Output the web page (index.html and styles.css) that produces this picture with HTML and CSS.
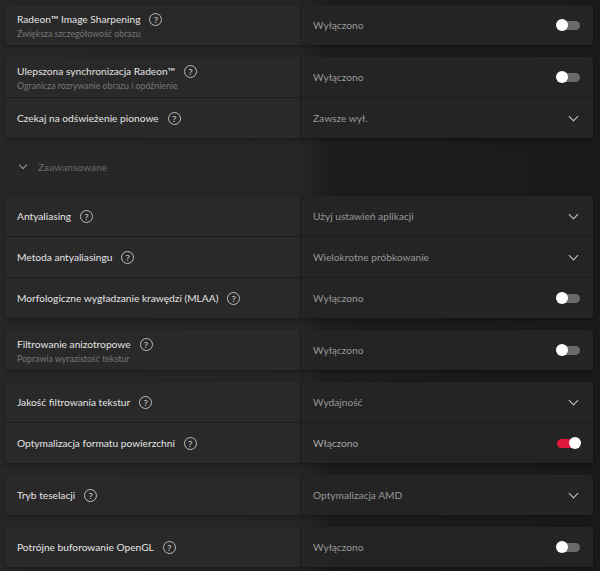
FILE: index.html
```html
<!DOCTYPE html>
<html lang="pl">

<head>
    <meta charset="UTF-8">
    <meta name="viewport" content="width=device-width, initial-scale=1.0">
    <title>Grafika</title>
    <link rel="stylesheet" href="styles.css">
</head>

<body>
    <div class="settings">
        <div class="group">
            <div class="row">
                <div class="label">
                    <div class="title">Radeon™ Image Sharpening <span class="help">?</span></div>
                    <div class="sub">Zwiększa szczegółowość obrazu</div>
                </div>
                <div class="value">Wyłączono <span class="switch"></span></div>
            </div>
        </div>

        <div class="group">
            <div class="row">
                <div class="label">
                    <div class="title">Ulepszona synchronizacja Radeon™ <span class="help">?</span></div>
                    <div class="sub">Ogranicza rozrywanie obrazu i opóźnienie</div>
                </div>
                <div class="value">Wyłączono <span class="switch"></span></div>
            </div>
            <div class="row">
                <div class="label">
                    <div class="title">Czekaj na odświeżenie pionowe <span class="help">?</span></div>
                </div>
                <div class="value">Zawsze wył. <span class="chevron"></span></div>
            </div>
        </div>

        <div class="section">
            <span class="chevron"></span>
            <span>Zaawansowane</span>
        </div>

        <div class="group">
            <div class="row">
                <div class="label">
                    <div class="title">Antyaliasing <span class="help">?</span></div>
                </div>
                <div class="value">Użyj ustawień aplikacji <span class="chevron"></span></div>
            </div>
            <div class="row">
                <div class="label">
                    <div class="title">Metoda antyaliasingu <span class="help">?</span></div>
                </div>
                <div class="value">Wielokrotne próbkowanie <span class="chevron"></span></div>
            </div>
            <div class="row">
                <div class="label">
                    <div class="title">Morfologiczne wygładzanie krawędzi (MLAA) <span class="help">?</span></div>
                </div>
                <div class="value">Wyłączono <span class="switch"></span></div>
            </div>
        </div>

        <div class="group">
            <div class="row">
                <div class="label">
                    <div class="title">Filtrowanie anizotropowe <span class="help">?</span></div>
                    <div class="sub">Poprawia wyrazistość tekstur</div>
                </div>
                <div class="value">Wyłączono <span class="switch"></span></div>
            </div>
        </div>

        <div class="group">
            <div class="row">
                <div class="label">
                    <div class="title">Jakość filtrowania tekstur <span class="help">?</span></div>
                </div>
                <div class="value">Wydajność <span class="chevron"></span></div>
            </div>
            <div class="row">
                <div class="label">
                    <div class="title">Optymalizacja formatu powierzchni <span class="help">?</span></div>
                </div>
                <div class="value on">Włączono <span class="switch checked"></span></div>
            </div>
        </div>

        <div class="group">
            <div class="row">
                <div class="label">
                    <div class="title">Tryb teselacji <span class="help">?</span></div>
                </div>
                <div class="value">Optymalizacja AMD <span class="chevron"></span></div>
            </div>
        </div>

        <div class="group">
            <div class="row">
                <div class="label">
                    <div class="title">Potrójne buforowanie OpenGL <span class="help">?</span></div>
                </div>
                <div class="value">Wyłączono <span class="switch"></span></div>
            </div>
        </div>
    </div>
</body>

</html>
```

FILE: styles.css
```css
*,
html,
body {
    margin: 0;
    padding: 0;
    box-sizing: border-box;
}

body {
    width: 600px;
    height: 571px;
    overflow: hidden;
    font-family: Lato, "Open Sans", sans-serif;
    font-size: 10.2px;
    color: #e4e4e4;
    background: linear-gradient(to right, #272727 0, #262626 50%, #1d1d1d 55%, #1a1a1a 100%);
}

.settings {
    padding: 5px 7px 0 5px;
    display: flex;
    flex-direction: column;
    gap: 12px;
}

.group {
    background-color: #292929;
    border-radius: 4px;
    box-shadow: 0 2px 5px rgba(0, 0, 0, 0.35);
    overflow: hidden;
}

.row {
    display: grid;
    grid-template-columns: 295px 1fr;
    height: 40px;
    box-sizing: content-box;
}

.row + .row {
    border-top: 1px solid #1c1c1c;
}

.label {
    display: flex;
    flex-direction: column;
    justify-content: center;
    padding-left: 12px;
}

.title {
    display: flex;
    align-items: center;
    gap: 9px;
    line-height: 16px;
}

.sub {
    font-size: 8.8px;
    color: #777777;
    margin-top: 1px;
}

.help {
    display: inline-flex;
    align-items: center;
    justify-content: center;
    width: 13px;
    height: 13px;
    border: 1.2px solid #bdbdbd;
    border-radius: 50%;
    font-family: "Open Sans", sans-serif;
    font-size: 9px;
    font-weight: 600;
    color: #bdbdbd;
    line-height: 1;
}

.value {
    display: flex;
    align-items: center;
    justify-content: space-between;
    padding: 0 12px 0 12px;
    background-color: #242424;
    border-left: 1px solid #1c1c1c;
    color: #989898;
}

.value.on {
    color: #a5a5a5;
}

.chevron {
    width: 7px;
    height: 7px;
    border-right: 1.5px solid #c8c8c8;
    border-bottom: 1.5px solid #c8c8c8;
    transform: rotate(45deg);
    margin: -4px 4px 0 0;
}

.switch {
    position: relative;
    width: 23px;
    height: 9px;
    border-radius: 5px;
    background-color: #6a6a6a;
    margin-right: 1px;
}

.switch:before {
    position: absolute;
    content: "";
    width: 12px;
    height: 12px;
    top: -2px;
    left: -1px;
    border-radius: 50%;
    background-color: white;
}

.switch.checked {
    background-color: #e1163c;
}

.switch.checked:before {
    left: 12px;
}

.section {
    display: flex;
    align-items: center;
    gap: 8px;
    height: 34px;
    padding-left: 15px;
    color: #6a6a6a;
    font-size: 10.2px;
}

.section .chevron {
    border-color: #9a9a9a;
    width: 6px;
    height: 6px;
}
```
